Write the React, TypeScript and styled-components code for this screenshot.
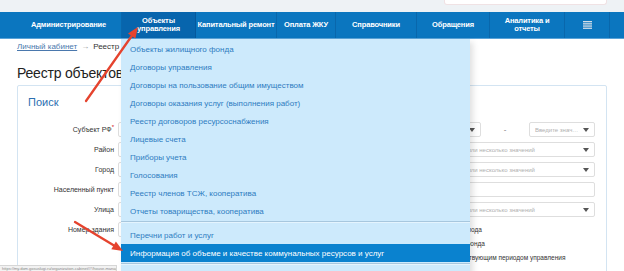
import styled, { createGlobalStyle } from "styled-components";

const GlobalStyle = createGlobalStyle`
    body {
        margin: 0;
        background: #ffffff;
        font-family: "Liberation Sans", Arial, sans-serif;
    }
`;

const Page = styled.div`
    position: relative;
    width: 624px;
    height: 271px;
    overflow: hidden;
    background: #ffffff;
`;

const TopStrip = styled.div`
    height: 12px;
    background: #eef2f5;
    display: flex;
    justify-content: flex-end;
    padding-right: 17px;
`;

const SearchBox = styled.div`
    width: 161px;
    height: 4px;
    background: #ffffff;
    border: 1px solid #f0e2e4;
    border-top: none;
    border-radius: 0 0 3px 3px;
`;

const NavBar = styled.nav`
    height: 26px;
    background: #0b76bf;
    border-bottom: 1px solid #5aa3d8;
`;

const NavInner = styled.div`
    display: flex;
    height: 100%;
    margin-left: 16px;
`;

const NavItem = styled.div<{ $w: number; $active?: boolean }>`
    width: ${p => p.$w}px;
    flex-shrink: 0;
    display: flex;
    align-items: center;
    justify-content: center;
    text-align: center;
    color: #ffffff;
    font-size: 7.5px;
    line-height: 8px;
    font-weight: 700;
    letter-spacing: -0.15px;
    background: ${p => (p.$active ? "#0765ad" : "transparent")};
    border-right: 1px solid rgba(0, 40, 90, 0.18);
    box-sizing: border-box;
`;

const Content = styled.div`
    padding: 0 17px;
`;

const Breadcrumbs = styled.div`
    margin-top: 3px;
    display: flex;
    gap: 4px;
    font-size: 8px;
    line-height: 10px;
    color: #333;

    a {
        color: #4a78ad;
        text-decoration: underline;
    }
    span.sep {
        color: #999;
    }
`;

const Title = styled.h1`
    margin: 12px 0 0;
    font-size: 14px;
    line-height: 18px;
    font-weight: 400;
    letter-spacing: -0.2px;
    color: #222;
`;

const Panel = styled.div`
    margin-top: 3px;
    border: 1px solid #d3e4f2;
    border-radius: 2px;
    padding: 10px 11px 20px 10px;
    min-height: 200px;
`;

const PanelTitle = styled.div`
    font-size: 11px;
    line-height: 13px;
    color: #2b6fb1;
`;

const Form = styled.div`
    margin-top: 13px;
    display: grid;
    grid-template-columns: 86px 1fr;
    column-gap: 4px;
    row-gap: 5px;
`;

const Label = styled.div<{ $top?: boolean }>`
    font-size: 7px;
    line-height: 14px;
    color: #333;
    text-align: right;
    align-self: ${p => (p.$top ? "start" : "center")};
    margin-top: ${p => (p.$top ? "1px" : "0")};

    sup {
        color: #d0021b;
        font-size: 6px;
        line-height: 0;
    }
`;

const Row = styled.div`
    display: flex;
    align-items: flex-start;
`;

const Select = styled.div<{ $w?: number; $indent?: number }>`
    ${p => (p.$w ? `width: ${p.$w}px; flex-shrink: 0;` : "flex: 1;")}
    height: 15px;
    box-sizing: border-box;
    border: 1px solid #dedede;
    border-radius: 2px;
    background: #ffffff;
    display: flex;
    align-items: center;
    padding: 0 5px 0 ${p => p.$indent ?? 5}px;
    font-size: 6px;
    color: #b0b0b0;
    white-space: nowrap;
    overflow: hidden;

    span {
        flex: 1;
        overflow: hidden;
        text-overflow: ellipsis;
    }
    &::after {
        content: "";
        margin-left: 4px;
        border-left: 3px solid transparent;
        border-right: 3px solid transparent;
        border-top: 4px solid #555;
    }
`;

const TextInput = styled.div<{ $w?: number }>`
    ${p => (p.$w ? `width: ${p.$w}px; flex-shrink: 0;` : "flex: 1;")}
    height: 15px;
    box-sizing: border-box;
    border: 1px solid #dedede;
    border-radius: 2px;
    background: #ffffff;
`;

const Dash = styled.div`
    width: 48px;
    flex-shrink: 0;
    text-align: center;
    font-size: 8px;
    line-height: 15px;
    color: #777;
`;

const CheckList = styled.div`
    margin-left: 31px;
    display: flex;
    flex-direction: column;
`;

const CheckItem = styled.label`
    height: 14px;
    display: flex;
    align-items: center;
    gap: 2px;
    font-size: 6.5px;
    color: #333;
    white-space: nowrap;
`;

const Box = styled.span`
    width: 8px;
    height: 8px;
    box-sizing: border-box;
    border: 1px solid #bbb;
    border-radius: 1px;
    background: #fff;
`;

const Dropdown = styled.div`
    position: absolute;
    left: 121px;
    top: 39px;
    width: 349px;
    height: 240px;
    padding-top: 1px;
    background: #cdeafc;
    box-shadow: 3px 3px 6px rgba(0, 0, 0, 0.12);
`;

const MenuItem = styled.div<{ $active?: boolean }>`
    height: 18px;
    display: flex;
    align-items: center;
    padding-left: 9px;
    font-size: 8px;
    color: ${p => (p.$active ? "#ffffff" : "#2d7cc1")};
    background: ${p => (p.$active ? "#0a82cf" : "transparent")};
    white-space: nowrap;
`;

const MenuDivider = styled.div`
    margin: 1px 0 3px;
    border-top: 1px solid #a7c7de;
    border-bottom: 1px solid #e4f4fe;
`;

const Overlay = styled.svg`
    position: absolute;
    left: 0;
    top: 0;
    pointer-events: none;
`;

const StatusBar = styled.div`
    position: absolute;
    left: 0;
    bottom: 0;
    width: 114px;
    height: 5px;
    background: #f2f2f2;
    border: 1px solid #d6d6d6;
    border-left: none;
    border-bottom: none;
    font-size: 4px;
    line-height: 5px;
    color: #888;
    padding-left: 2px;
    white-space: nowrap;
    overflow: hidden;
`;

const navItems = [
    { w: 106, label: "Администрирование" },
    { w: 74, label: "Объекты\nуправления", active: true },
    { w: 81, label: "Капитальный ремонт" },
    { w: 59, label: "Оплата ЖКУ" },
    { w: 81, label: "Справочники" },
    { w: 73, label: "Обращения" },
    { w: 75, label: "Аналитика и\nотчеты" },
];

const menuTop = [
    "Объекты жилищного фонда",
    "Договоры управления",
    "Договоры на пользование общим имуществом",
    "Договоры оказания услуг (выполнения работ)",
    "Реестр договоров ресурсоснабжения",
    "Лицевые счета",
    "Приборы учета",
    "Голосования",
    "Реестр членов ТСЖ, кооператива",
    "Отчеты товарищества, кооператива",
];

const PLACEHOLDER = "Выберите одно или несколько значений";

function App() {
    return (
        <Page>
            <GlobalStyle />
            <TopStrip>
                <SearchBox />
            </TopStrip>
            <NavBar>
                <NavInner>
                    {navItems.map(item => (
                        <NavItem key={item.label} $w={item.w} $active={item.active}>
                            <span>
                                {item.label.split("\n").map((l, i) => (
                                    <div key={i}>{l}</div>
                                ))}
                            </span>
                        </NavItem>
                    ))}
                    <NavItem $w={45}>
                        <svg width="9" height="8" viewBox="0 0 9 8">
                            <rect x="0" y="0" width="9" height="1.3" fill="#d3dde7" />
                            <rect x="0" y="2.2" width="9" height="1.3" fill="#d3dde7" />
                            <rect x="0" y="4.4" width="9" height="1.3" fill="#d3dde7" />
                            <rect x="0" y="6.6" width="9" height="1.3" fill="#d3dde7" />
                        </svg>
                    </NavItem>
                </NavInner>
            </NavBar>

            <Content>
                <Breadcrumbs>
                    <a>Личный кабинет</a>
                    <span className="sep">→</span>
                    <span>Реестр объектов жилищного фонда</span>
                </Breadcrumbs>
                <Title>Реестр объектов жилищного фонда</Title>
                <Panel>
                    <PanelTitle>Поиск</PanelTitle>
                    <Form>
                        <Label>Субъект РФ<sup>*</sup></Label>
                        <Row>
                            <Select><span>Выберите значение</span></Select>
                            <Dash>-</Dash>
                            <Select $w={66}><span>Введите значение</span></Select>
                        </Row>

                        <Label>Район</Label>
                        <Select $indent={304}><span>{PLACEHOLDER}</span></Select>

                        <Label>Город</Label>
                        <Select $indent={304}><span>{PLACEHOLDER}</span></Select>

                        <Label>Населенный пункт</Label>
                        <TextInput />

                        <Label>Улица</Label>
                        <Select $indent={304}><span>{PLACEHOLDER}</span></Select>

                        <Label $top>Номер здания</Label>
                        <Row>
                            <TextInput $w={220} />
                            <CheckList>
                                <CheckItem><Box />Отображать объекты без периода</CheckItem>
                                <CheckItem><Box />Кроме объектов жилищного фонда</CheckItem>
                                <CheckItem><Box />Отображать объекты с отсутствующим периодом управления</CheckItem>
                            </CheckList>
                        </Row>
                    </Form>
                </Panel>
            </Content>

            <Dropdown>
                {menuTop.map(m => (
                    <MenuItem key={m}>{m}</MenuItem>
                ))}
                <MenuDivider />
                <MenuItem>Перечни работ и услуг</MenuItem>
                <MenuItem $active>Информация об объеме и качестве коммунальных ресурсов и услуг</MenuItem>
                <MenuDivider />
            </Dropdown>

            <Overlay width="624" height="271" viewBox="0 0 624 271">
                <g stroke="#e5432e" strokeWidth="2.3" strokeLinecap="round" fill="none">
                    <line x1="86" y1="101" x2="131.7" y2="36" />
                    <line x1="75" y1="222" x2="113.6" y2="245.3" />
                </g>
                <g fill="#e5432e">
                    <polygon points="138,27 135.4,38.6 128,33.4" />
                    <polygon points="123,251 111.3,249.2 115.9,241.5" />
                </g>
            </Overlay>

            <StatusBar>https://my.dom.gosuslugi.ru/organization-cabinet/#!/house-management</StatusBar>
        </Page>
    );
}

export default App;
